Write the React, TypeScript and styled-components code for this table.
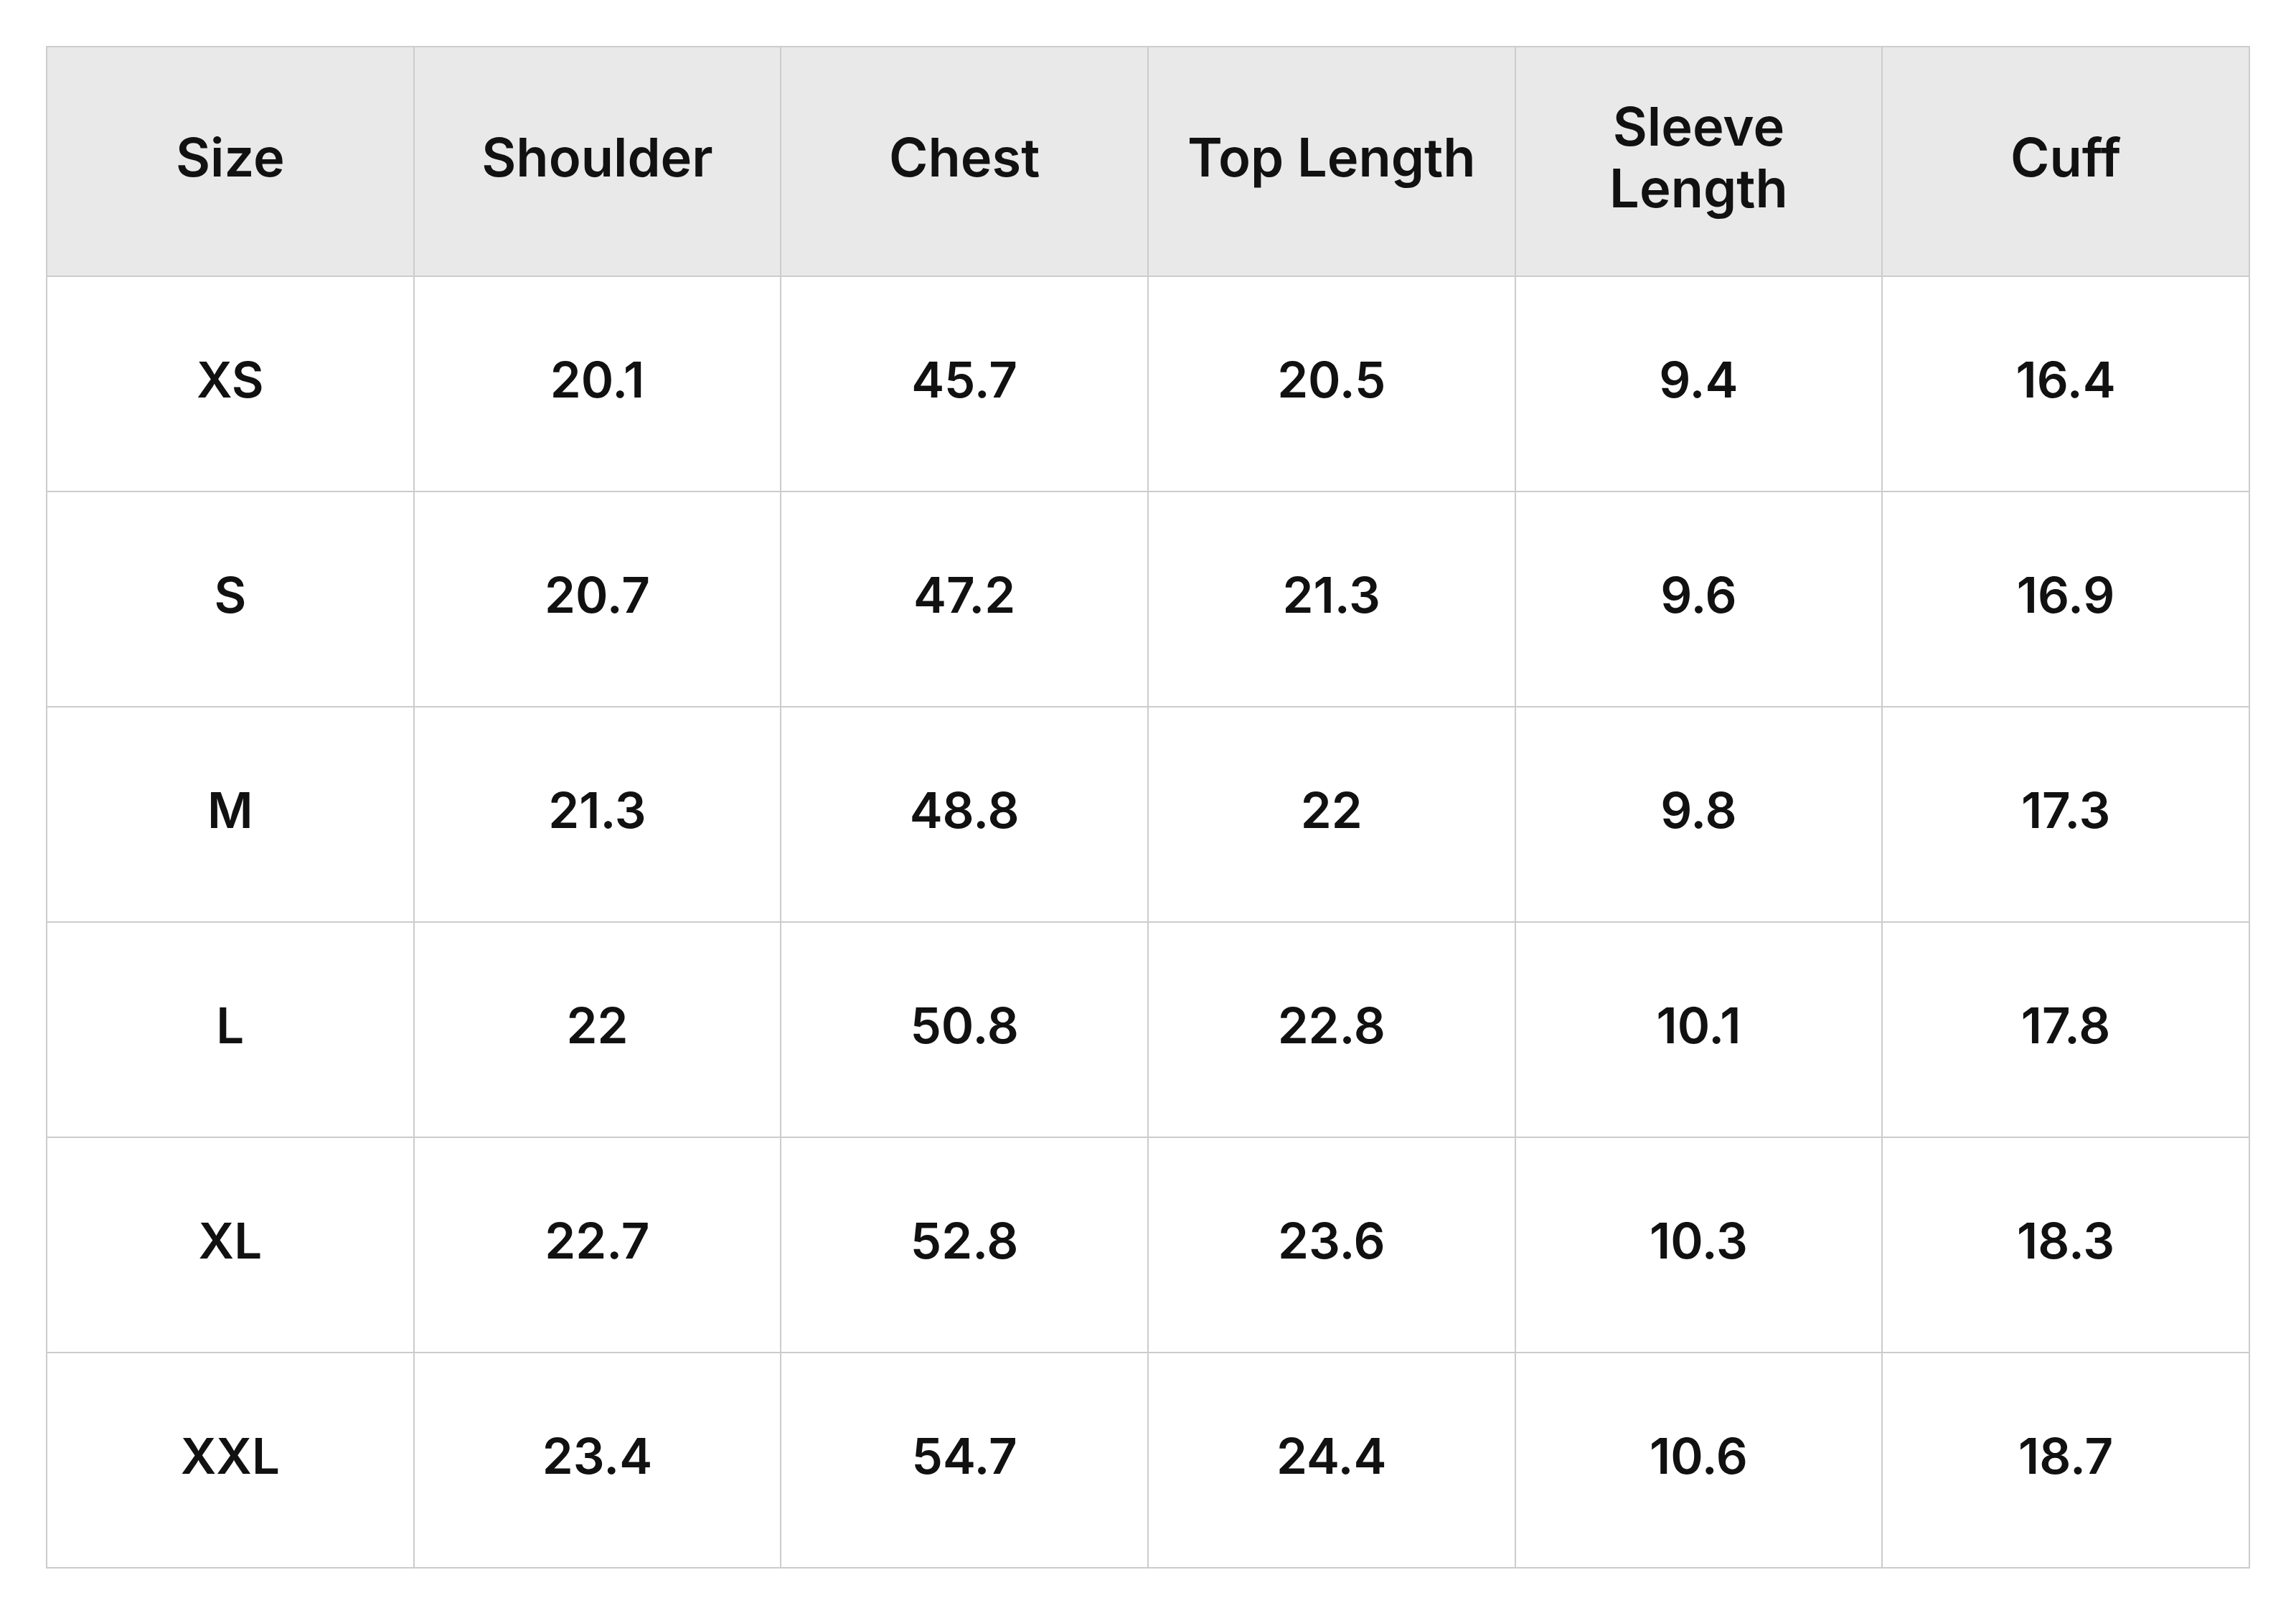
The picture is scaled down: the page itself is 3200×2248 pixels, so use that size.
import React from "react";
import styled, { createGlobalStyle } from "styled-components";

const GlobalStyle = createGlobalStyle`
  html, body {
    margin: 0;
    padding: 0;
    background: #ffffff;
  }
  body {
    font-family: Inter, "Noto Sans", "Liberation Sans", sans-serif;
    color: #111111;
  }
`;

const Page = styled.div`
  padding: 64px 64px 62px 64px;
  box-sizing: border-box;
  width: 3200px;
`;

const Table = styled.table`
  width: 100%;
  border-collapse: collapse;
  table-layout: fixed;
  border: 2px solid #cccccc;
`;

const HeadCell = styled.th`
  background: #e9e9e9;
  border: 2px solid #cccccc;
  height: 306px;
  padding: 0 24px 12px 24px;
  text-align: center;
  vertical-align: middle;
  font-size: 74px;
  font-weight: 600;
  line-height: 86px;
  color: #111111;
`;

const Cell = styled.td`
  border: 2px solid #cccccc;
  height: 286px;
  padding: 0 24px 12px 24px;
  text-align: center;
  vertical-align: middle;
  font-size: 69px;
  font-weight: 600;
  color: #111111;
`;

const headers = ["Size", "Shoulder", "Chest", "Top Length", "Sleeve Length", "Cuff"];

const rows: string[][] = [
  ["XS", "20.1", "45.7", "20.5", "9.4", "16.4"],
  ["S", "20.7", "47.2", "21.3", "9.6", "16.9"],
  ["M", "21.3", "48.8", "22", "9.8", "17.3"],
  ["L", "22", "50.8", "22.8", "10.1", "17.8"],
  ["XL", "22.7", "52.8", "23.6", "10.3", "18.3"],
  ["XXL", "23.4", "54.7", "24.4", "10.6", "18.7"],
];

export default function App() {
  return (
    <>
      <GlobalStyle />
      <Page>
        <Table>
          <thead>
            <tr>
              {headers.map((h) => (
                <HeadCell key={h}>{h}</HeadCell>
              ))}
            </tr>
          </thead>
          <tbody>
            {rows.map((r) => (
              <tr key={r[0]}>
                {r.map((v, i) => (
                  <Cell key={i}>{v}</Cell>
                ))}
              </tr>
            ))}
          </tbody>
        </Table>
      </Page>
    </>
  );
}
